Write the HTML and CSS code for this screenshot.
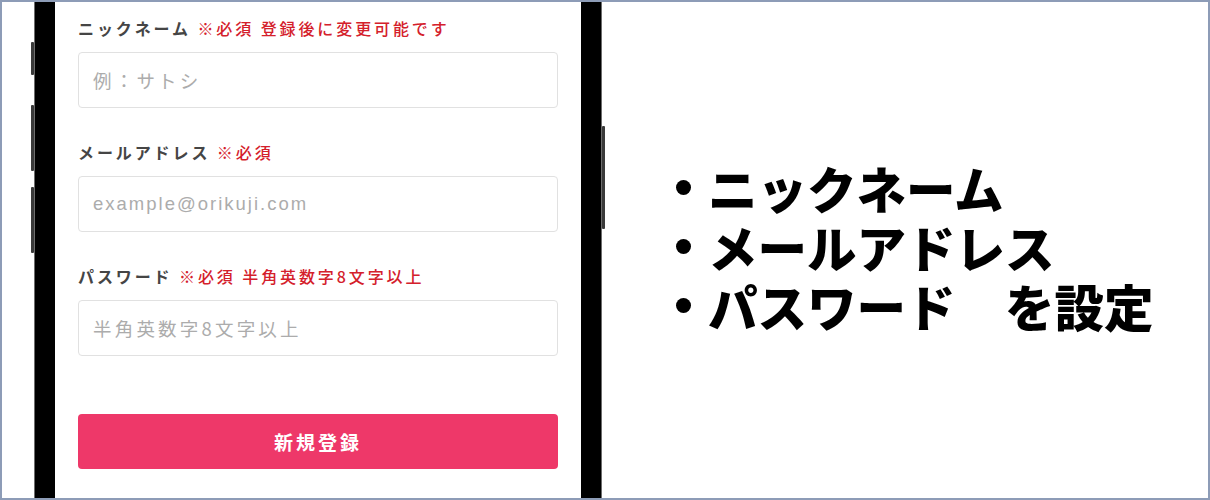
FILE: index.html
```html
<!DOCTYPE html>
<html lang="ja">
<head>
<meta charset="utf-8">
<link rel="stylesheet" href="styles.css">
</head>
<body>
<div class="frame">
  <div class="phone">
    <span class="side-btn side-l1"></span>
    <span class="side-btn side-l2"></span>
    <span class="side-btn side-l3"></span>
    <span class="side-btn side-r1"></span>
    <form class="form">
      <div class="field">
        <div class="label">ニックネーム <span class="req">※必須 登録後に変更可能です</span></div>
        <div class="input jp">例：サトシ</div>
      </div>
      <div class="field">
        <div class="label">メールアドレス <span class="req">※必須</span></div>
        <div class="input latin">example@orikuji.com</div>
      </div>
      <div class="field">
        <div class="label">パスワード <span class="req">※必須 半角英数字8文字以上</span></div>
        <div class="input jp">半角英数字8文字以上</div>
      </div>
      <div class="submit">新規登録</div>
    </form>
  </div>
  <div class="notes">
    <ul class="list">
      <li class="item">ニックネーム</li>
      <li class="item">メールアドレス</li>
      <li class="item">パスワード　を設定</li>
    </ul>
  </div>
</div>
</body>
</html>
```
FILE: styles.css
```css
html, body {
  margin: 0;
  padding: 0;
  background: #fff;
}
.frame {
  width: 1210px;
  height: 500px;
  box-sizing: border-box;
  border: 2px solid #8d9cb7;
  display: flex;
  background: #fff;
  font-family: "Liberation Sans", "Noto Sans CJK JP", sans-serif;
}
.phone {
  position: relative;
  margin-left: 33px;
  width: 526px;
  height: 100%;
  flex: none;
  border-left: 20px solid #000;
  border-right: 20px solid #000;
  box-shadow: -1px 0 0 #6d6d6d, 1px 0 0 #6d6d6d;
  background: #fff;
}
.side-btn {
  position: absolute;
  width: 3px;
  background: #3a3a3a;
  border-radius: 1px;
}
.side-l1 { left: -24px; top: 40px; height: 33px; }
.side-l2 { left: -24px; top: 103px; height: 66px; }
.side-l3 { left: -24px; top: 185px; height: 66px; }
.side-r1 { right: -24px; top: 124px; height: 103px; }
.form {
  padding: 14px 23px 0;
}
.field {
  margin-bottom: 32px;
}
.field:last-of-type {
  margin-bottom: 0;
}
.label {
  height: 24px;
  line-height: 24px;
  font-size: 16px;
  font-weight: 700;
  letter-spacing: 2.9px;
  color: #454545;
  font-family: "Noto Sans CJK JP", sans-serif;
  margin-bottom: 12px;
  white-space: nowrap;
}
.req {
  color: #d4202b;
  font-weight: 500;
}
.input {
  height: 56px;
  box-sizing: border-box;
  border: 1px solid #e1e1e1;
  border-radius: 4px;
  padding-left: 14px;
  display: flex;
  align-items: center;
  color: #acacac;
  font-size: 18.5px;
}
.input.jp {
  font-family: "Noto Sans CJK JP", sans-serif;
  letter-spacing: 3.2px;
}
.input.latin {
  font-family: "Liberation Sans", sans-serif;
  letter-spacing: 2px;
}
.submit {
  margin-top: 58px;
  height: 55px;
  border-radius: 4px;
  background: #ee3869;
  color: #fff;
  font-family: "Noto Sans CJK JP", sans-serif;
  font-weight: 700;
  font-size: 19px;
  letter-spacing: 3px;
  display: flex;
  align-items: center;
  justify-content: center;
}
.notes {
  flex: 1;
  padding-left: 75px;
  padding-top: 156px;
}
.list {
  list-style: none;
  margin: 0;
  padding: 0;
}
.item {
  display: flex;
  align-items: center;
  height: 59px;
  font-family: "Noto Sans CJK JP", sans-serif;
  font-weight: 900;
  font-size: 49.5px;
  line-height: 59px;
  color: #000;
  white-space: pre;
}
.item::before {
  content: "";
  width: 15px;
  height: 15px;
  border-radius: 50%;
  background: #000;
  margin-right: 17px;
  flex: none;
}
```
